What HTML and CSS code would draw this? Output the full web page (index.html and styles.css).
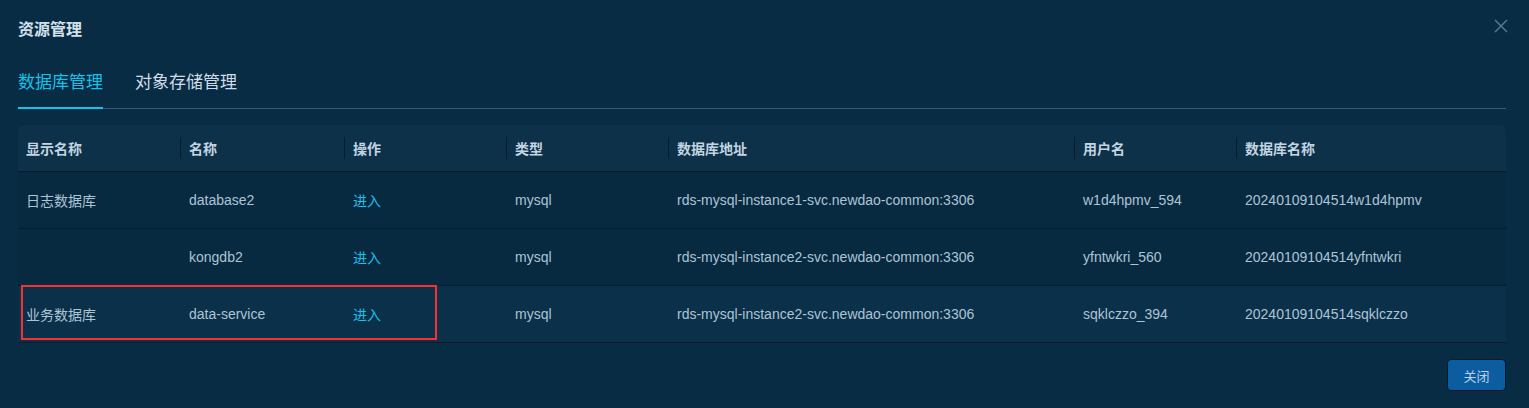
FILE: index.html
```html
<!DOCTYPE html>
<html>
<head>
    <title>资源管理</title>
    <link rel="stylesheet" href="styles.css">
</head>
<body>
    <div class="dialog">
        <div class="dialog-header">
            <h2>资源管理</h2>
            <svg class="close" width="14" height="14" viewBox="0 0 14 14">
                <path d="M1 1 L13 13 M13 1 L1 13" stroke="#5d7b91" stroke-width="1.4" fill="none"/>
            </svg>
        </div>

        <div class="tabs">
            <div class="tab active">数据库管理</div>
            <div class="tab">对象存储管理</div>
        </div>

        <table class="data-table">
            <colgroup>
                <col style="width:162px">
                <col style="width:164px">
                <col style="width:162px">
                <col style="width:162px">
                <col style="width:406px">
                <col style="width:162px">
                <col>
            </colgroup>
            <thead>
                <tr>
                    <th>显示名称</th>
                    <th>名称</th>
                    <th>操作</th>
                    <th>类型</th>
                    <th>数据库地址</th>
                    <th>用户名</th>
                    <th>数据库名称</th>
                </tr>
            </thead>
            <tbody>
                <tr>
                    <td>日志数据库</td>
                    <td>database2</td>
                    <td><a class="link">进入</a></td>
                    <td>mysql</td>
                    <td>rds-mysql-instance1-svc.newdao-common:3306</td>
                    <td>w1d4hpmv_594</td>
                    <td>20240109104514w1d4hpmv</td>
                </tr>
                <tr>
                    <td></td>
                    <td>kongdb2</td>
                    <td><a class="link">进入</a></td>
                    <td>mysql</td>
                    <td>rds-mysql-instance2-svc.newdao-common:3306</td>
                    <td>yfntwkri_560</td>
                    <td>20240109104514yfntwkri</td>
                </tr>
                <tr class="hover">
                    <td class="marked">业务数据库<span class="mark"></span></td>
                    <td>data-service</td>
                    <td><a class="link">进入</a></td>
                    <td>mysql</td>
                    <td>rds-mysql-instance2-svc.newdao-common:3306</td>
                    <td>sqklczzo_394</td>
                    <td>20240109104514sqklczzo</td>
                </tr>
            </tbody>
        </table>

        <div class="dialog-footer">
            <button class="btn">关闭</button>
        </div>
    </div>
</body>
</html>
```

FILE: styles.css
```css
body {
    margin: 0;
    background-color: #082c44;
    font-family: "Liberation Sans", "Noto Sans CJK SC", sans-serif;
    color: #adc4d5;
}

.dialog {
    padding: 0 23px 0 18px;
}

.dialog-header {
    height: 60px;
    display: flex;
    align-items: center;
    justify-content: space-between;
}

.dialog-header h2 {
    margin: -4px 0 0 0;
    font-size: 16px;
    font-weight: bold;
    color: #d3e1ec;
}

.close {
    margin-right: -2px;
    margin-top: -8px;
}

.tabs {
    display: flex;
    gap: 32px;
    border-bottom: 1px solid #3b5a72;
    height: 48px;
}

.tab {
    font-size: 17px;
    line-height: 46px;
    color: #d0dde8;
    border-bottom: 2px solid transparent;
    margin-bottom: -1px;
}

.tab.active {
    color: #17c2ea;
    border-bottom-color: #17c2ea;
}

.data-table {
    width: 100%;
    margin-top: 16px;
    border-collapse: separate;
    border-spacing: 0;
    table-layout: fixed;
    font-size: 14px;
}

.data-table th {
    background-color: #0c3149;
    color: #c3d5e2;
    font-weight: bold;
    text-align: left;
    height: 46px;
    padding: 0 8px;
    border-bottom: 1px solid #051d2f;
    position: relative;
}

.data-table th:first-child {
    border-top-left-radius: 6px;
}

.data-table th:last-child {
    border-top-right-radius: 6px;
}

/* short column separators in the header */
.data-table th + th::before {
    content: "";
    position: absolute;
    left: 0;
    top: 12px;
    height: 22px;
    border-left: 1px solid #051d2f;
}

.data-table td {
    height: 56px;
    padding: 0 8px;
    border-bottom: 1px solid #051d2f;
    background-color: #082a41;
    white-space: nowrap;
}

.data-table th + th,
.data-table td + td {
    padding-left: 9px;
}

.data-table tr.hover td {
    background-color: #0b3049;
}

.link {
    color: #1cc1ea;
}

.marked {
    position: relative;
}

.mark {
    position: absolute;
    left: 3px;
    top: -1px;
    width: 412px;
    height: 51px;
    border: 2px solid #fa2f2f;
}

.dialog-footer {
    display: flex;
    justify-content: flex-end;
    padding-top: 16px;
}

.btn {
    width: 59px;
    height: 32px;
    background-color: #0b5da0;
    border: 1px solid #041a2a;
    border-radius: 4px;
    color: #b9d3ea;
    font-size: 13px;
    font-family: "Liberation Sans", "Noto Sans CJK SC", sans-serif;
}
```
